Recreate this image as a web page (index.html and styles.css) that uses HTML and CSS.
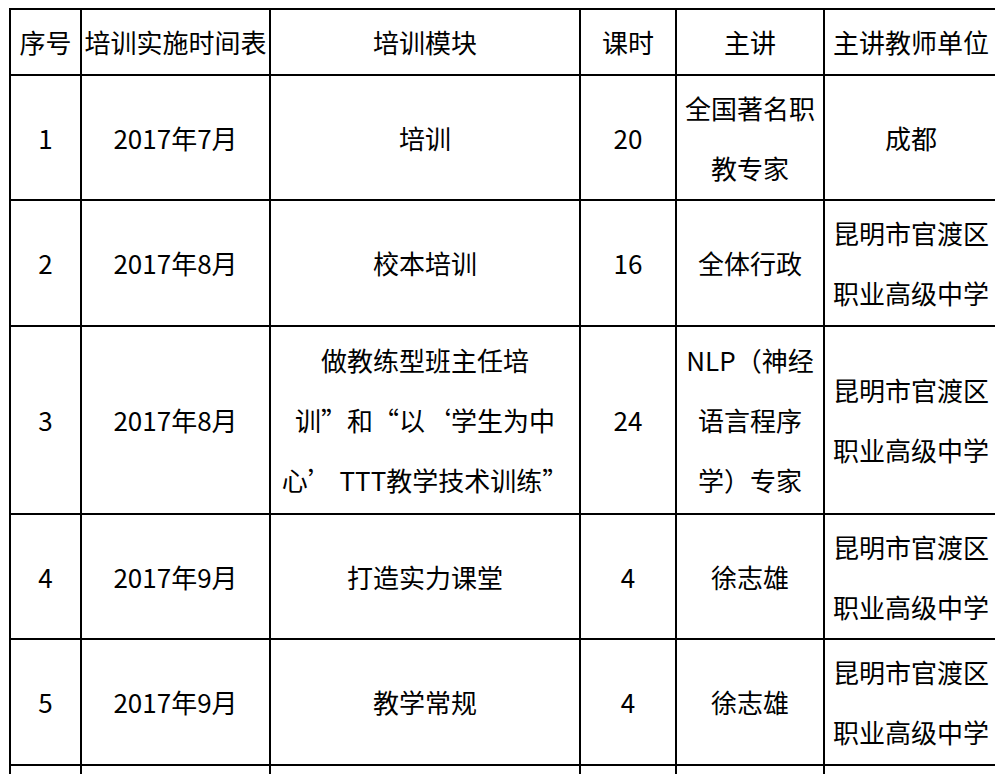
FILE: index.html
```html
<!DOCTYPE html>
<html lang="zh-CN">
<head>
<meta charset="utf-8">
<title>培训实施时间表</title>
<link rel="stylesheet" href="styles.css">
</head>
<body>
<table class="schedule">
  <tr class="row-head">
    <td class="c-no">序号</td>
    <td class="c-date">培训实施时间表</td>
    <td class="c-module">培训模块</td>
    <td class="c-hours">课时</td>
    <td class="c-speaker">主讲</td>
    <td class="c-unit">主讲教师单位</td>
  </tr>
  <tr class="row-a">
    <td>1</td>
    <td>2017年7月</td>
    <td>培训</td>
    <td>20</td>
    <td>全国著名职<br>教专家</td>
    <td>成都</td>
  </tr>
  <tr class="row-b">
    <td>2</td>
    <td>2017年8月</td>
    <td>校本培训</td>
    <td>16</td>
    <td>全体行政</td>
    <td>昆明市官渡区<br>职业高级中学</td>
  </tr>
  <tr class="row-c">
    <td>3</td>
    <td>2017年8月</td>
    <td>做教练型班主任培<br>训”和“以‘学生为中<br>心’ TTT教学技术训练”</td>
    <td>24</td>
    <td>NLP（神经<br>语言程序<br>学）专家</td>
    <td>昆明市官渡区<br>职业高级中学</td>
  </tr>
  <tr class="row-a">
    <td>4</td>
    <td>2017年9月</td>
    <td>打造实力课堂</td>
    <td>4</td>
    <td>徐志雄</td>
    <td>昆明市官渡区<br>职业高级中学</td>
  </tr>
  <tr class="row-b">
    <td>5</td>
    <td>2017年9月</td>
    <td>教学常规</td>
    <td>4</td>
    <td>徐志雄</td>
    <td>昆明市官渡区<br>职业高级中学</td>
  </tr>
  <tr class="row-a">
    <td></td>
    <td></td>
    <td></td>
    <td></td>
    <td></td>
    <td></td>
  </tr>
</table>
</body>
</html>
```

FILE: styles.css
```css
html, body {
  margin: 0;
  padding: 0;
  background: #ffffff;
  overflow: hidden;
}

.schedule {
  margin: 8px 0 0 9px;
  border-collapse: separate;
  border-spacing: 0;
  table-layout: fixed;
  width: 990px;
  border-top: 2px solid #000;
  border-left: 2px solid #000;
  font-family: "Noto Sans CJK SC", "Microsoft YaHei", sans-serif;
  font-size: 26px;
  line-height: 60px;
  color: #000;
}

.schedule td {
  box-sizing: border-box;
  border-right: 2px solid #000;
  border-bottom: 2px solid #000;
  padding: 0;
  text-align: center;
  vertical-align: middle;
  white-space: nowrap;
  overflow: hidden;
}

.c-no { width: 71px; }
.c-date { width: 189px; }
.c-module { width: 310px; }
.c-hours { width: 96px; }
.c-speaker { width: 148px; }
.c-unit { width: 174px; }

.row-head { height: 66px; }
.row-a { height: 125px; }
.row-b { height: 126px; }
.row-c { height: 188px; }
```
